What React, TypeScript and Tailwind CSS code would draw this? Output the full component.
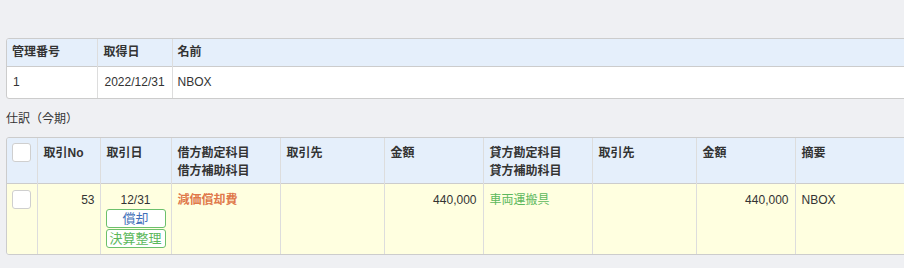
import React from "react";

const font = { fontFamily: '"Liberation Sans", "Noto Sans CJK JP", sans-serif' };

const Checkbox = () => (
  <div className="w-[19px] h-[19px] rounded-[3px] border border-[#cfcfcf] bg-white" />
);

const Badge = ({ label, tone }: { label: string; tone: "blue" | "green" }) => (
  <div
    className={`w-[60px] h-[19px] flex items-center justify-center rounded-[3px] border border-[#6cc06c] bg-white text-[13px] leading-none ${
      tone === "blue" ? "text-[#3f6fb8]" : "text-[#5cb85c]"
    }`}
  >
    {label}
  </div>
);

export default function App() {
  return (
    <div className="w-[904px] h-[268px] overflow-hidden bg-[#eff0f3] text-[12px] text-[#333]" style={font}>
      <div className="w-[1100px] pl-[6px] pt-[38px]">
        {/* asset summary */}
        <div className="border border-[#cccccc] rounded-[3px] overflow-hidden bg-white">
          <table className="border-collapse table-fixed w-full">
            <colgroup>
              <col className="w-[90px]" />
              <col className="w-[75px]" />
              <col />
            </colgroup>
            <thead>
              <tr className="bg-[#e5effb] h-[27px] border-b border-[#cccccc]">
                <th className="text-left font-bold px-[5px] border-r border-[#dddddd]">管理番号</th>
                <th className="text-left font-bold px-[6px] border-r border-[#dddddd]">取得日</th>
                <th className="text-left font-bold px-[5px]">名前</th>
              </tr>
            </thead>
            <tbody>
              <tr className="h-[32px]">
                <td className="px-[6px] border-r border-[#dddddd]">1</td>
                <td className="px-[7px] border-r border-[#dddddd]">2022/12/31</td>
                <td className="px-[5px]">NBOX</td>
              </tr>
            </tbody>
          </table>
        </div>

        <div className="h-[38px] flex items-center pt-[1px]">仕訳（今期）</div>

        {/* journal entries */}
        <div className="border border-[#cccccc] rounded-[3px] overflow-hidden">
          <table className="border-collapse table-fixed w-full">
            <colgroup>
              <col className="w-[30px]" />
              <col className="w-[63px]" />
              <col className="w-[71px]" />
              <col className="w-[109px]" />
              <col className="w-[104px]" />
              <col className="w-[99px]" />
              <col className="w-[109px]" />
              <col className="w-[104px]" />
              <col className="w-[99px]" />
              <col />
            </colgroup>
            <thead>
              <tr className="bg-[#e5effb] h-[45px] border-b border-[#cccccc] align-top leading-[18px]">
                <th className="border-r border-[#dddddd] pt-[5px] pl-[5px]">
                  <Checkbox />
                </th>
                <th className="text-left font-bold px-[6px] pt-[6px] border-r border-[#dddddd]">取引No</th>
                <th className="text-left font-bold px-[6px] pt-[6px] border-r border-[#dddddd]">取引日</th>
                <th className="text-left font-bold px-[6px] pt-[6px] border-r border-[#dddddd]">
                  借方勘定科目
                  <br />
                  借方補助科目
                </th>
                <th className="text-left font-bold px-[6px] pt-[6px] border-r border-[#dddddd]">取引先</th>
                <th className="text-left font-bold px-[6px] pt-[6px] border-r border-[#dddddd]">金額</th>
                <th className="text-left font-bold px-[6px] pt-[6px] border-r border-[#dddddd]">
                  貸方勘定科目
                  <br />
                  貸方補助科目
                </th>
                <th className="text-left font-bold px-[6px] pt-[6px] border-r border-[#dddddd]">取引先</th>
                <th className="text-left font-bold px-[6px] pt-[6px] border-r border-[#dddddd]">金額</th>
                <th className="text-left font-bold px-[6px] pt-[6px]">摘要</th>
              </tr>
            </thead>
            <tbody>
              <tr className="bg-[#ffffe0] h-[71px] align-top leading-[18px]">
                <td className="border-r border-[#dddddd] pt-[6px] pl-[5px]">
                  <Checkbox />
                </td>
                <td className="text-right px-[5px] pt-[7px] border-r border-[#dddddd]">53</td>
                <td className="pt-[7px] border-r border-[#dddddd]">
                  <div className="flex flex-col items-center">
                    <div>12/31</div>
                    <Badge label="償却" tone="blue" />
                    <div className="h-[1px]" />
                    <Badge label="決算整理" tone="green" />
                  </div>
                </td>
                <td className="px-[6px] pt-[7px] border-r border-[#dddddd] font-bold text-[#e0784a]">減価償却費</td>
                <td className="border-r border-[#dddddd]" />
                <td className="text-right px-[6px] pt-[7px] border-r border-[#dddddd]">440,000</td>
                <td className="px-[6px] pt-[7px] border-r border-[#dddddd] text-[#5cb85c]">車両運搬具</td>
                <td className="border-r border-[#dddddd]" />
                <td className="text-right px-[6px] pt-[7px] border-r border-[#dddddd]">440,000</td>
                <td className="px-[6px] pt-[7px]">NBOX</td>
              </tr>
            </tbody>
          </table>
        </div>
      </div>
    </div>
  );
}
